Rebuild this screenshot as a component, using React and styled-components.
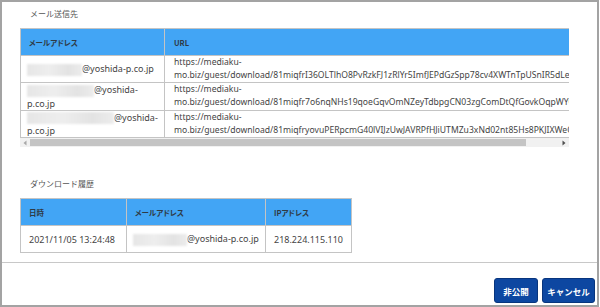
import React from 'react'
import styled, { createGlobalStyle } from 'styled-components'

const GlobalStyle = createGlobalStyle`
  html, body {
    margin: 0;
    padding: 0;
    background: #ffffff;
  }
  body {
    font-family: "Noto Sans", "Noto Sans CJK JP", sans-serif;
    color: #444;
  }
`

const Frame = styled.div`
  box-sizing: border-box;
  width: 599px;
  height: 307px;
  border: 2px solid #a3a3a3;
  background: #fff;
  display: flex;
  flex-direction: column;
  overflow: hidden;
`

const Main = styled.div`
  flex: 1;
  padding: 6px 0 0 18px;
  display: flex;
  flex-direction: column;
`

const SectionTitle = styled.div`
  font-family: "Noto Sans CJK JP", sans-serif;
  font-size: 8px;
  line-height: 12px;
  color: #555;
  padding-left: 10px;
  margin-top: ${p => p.top || 0}px;
  margin-bottom: 8px;
`

const ScrollArea = styled.div`
  width: 549px;
  overflow: hidden;
`

const Table = styled.table`
  border-collapse: collapse;
  table-layout: fixed;
  width: ${p => p.width}px;
  font-size: 9px;
`

const Th = styled.th`
  box-sizing: border-box;
  width: ${p => p.width ? `${p.width}px` : 'auto'};
  height: 27px;
  padding: 0 0 0 ${p => p.pad || 8}px;
  background: #42a5f5;
  border: 1px solid #c4c4c4;
  text-align: left;
  font-family: "Noto Sans CJK JP", sans-serif;
  font-feature-settings: "palt";
  font-size: 7.5px;
  font-weight: 700;
  color: #2f3a45;
`

const Td = styled.td`
  box-sizing: border-box;
  height: 27px;
  padding: 0 2px 0 ${p => p.pad || 8}px;
  border: 1px solid #c4c4c4;
  font-size: ${p => p.size || 9}px;
  line-height: 13px;
  vertical-align: middle;
  white-space: ${p => p.nowrap ? 'nowrap' : 'normal'};
`

const Blur = styled.span`
  display: inline-block;
  width: ${p => p.width}px;
  height: 12px;
  vertical-align: middle;
  background: linear-gradient(90deg, #e6e6e6, #eeeeee 40%, #e3e3e3 75%, #ececec);
  filter: blur(1px);
`

const ScrollBar = styled.div`
  width: 549px;
  height: 9px;
  background: #f1f1f1;
  display: flex;
  align-items: center;
`

const Arrow = styled.div`
  width: 10px;
  display: flex;
  justify-content: center;
  align-items: center;
`

const Track = styled.div`
  flex: 1;
  height: 9px;
  display: flex;
`

const Thumb = styled.div`
  height: 7px;
  margin-top: 1px;
  background: #c4c4c4;
`

const Footer = styled.div`
  height: 43px;
  box-sizing: border-box;
  border-top: 1px solid #c8c8c8;
  display: flex;
  justify-content: flex-end;
  align-items: flex-start;
  gap: 4px;
  padding: 15px 2px 0 0;
`

const Button = styled.button`
  box-sizing: border-box;
  width: ${p => p.width}px;
  height: 25px;
  padding: 0;
  background: #0d47a1;
  border: 1px solid #08357d;
  border-radius: 3px;
  color: #fff;
  font-family: "Noto Sans CJK JP", sans-serif;
  font-size: 8.5px;
  font-weight: 700;
`

const recipients = [
  {
    blur: 55,
    url: 'https://mediaku-mo.biz/guest/download/81miqfrI36OLTlhO8PvRzkFJ1zRlYr5ImfJEPdGzSpp78cv4XWTnTpUSnIR5dLeaQ',
  },
  {
    blur: 67,
    url: 'https://mediaku-mo.biz/guest/download/81miqfr7o6nqNHs19qoeGqvOmNZeyTdbpgCN03zgComDtQfGovkOqpWYQ8U',
  },
  {
    blur: 87,
    url: 'https://mediaku-mo.biz/guest/download/81miqfryovuPERpcmG40lVIJzUwJAVRPfHJiUTMZu3xNd02nt85Hs8PKJIXWeQ',
  },
]

const App = () => {
  return (
    <Frame>
      <GlobalStyle />
      <Main>
        <SectionTitle>メール送信先</SectionTitle>
        <ScrollArea>
          <Table width={600}>
            <thead>
              <tr>
                <Th width={144}>メールアドレス</Th>
                <Th pad={9}>URL</Th>
              </tr>
            </thead>
            <tbody>
              {recipients.map((r, i) => (
                <tr key={i}>
                  <Td pad={6}>
                    <Blur width={r.blur} />@yoshida-p.co.jp
                  </Td>
                  <Td pad={9} size={8.6}>{r.url}</Td>
                </tr>
              ))}
            </tbody>
          </Table>
        </ScrollArea>
        <ScrollBar>
          <Arrow>
            <svg width="4" height="6" viewBox="0 0 4 6">
              <path d="M3.5 0.5 L0.5 3 L3.5 5.5 Z" fill="#a8a8a8" />
            </svg>
          </Arrow>
          <Track>
            <Thumb style={{ marginLeft: 0, width: 496 }} />
          </Track>
          <Arrow>
            <svg width="4" height="6" viewBox="0 0 4 6">
              <path d="M0.5 0.5 L3.5 3 L0.5 5.5 Z" fill="#505050" />
            </svg>
          </Arrow>
        </ScrollBar>

        <SectionTitle top={31}>ダウンロード履歴</SectionTitle>
        <Table width={332}>
          <thead>
            <tr>
              <Th width={106}>日時</Th>
              <Th width={139}>メールアドレス</Th>
              <Th>IPアドレス</Th>
            </tr>
          </thead>
          <tbody>
            <tr>
              <Td nowrap>2021/11/05 13:24:48</Td>
              <Td pad={6} nowrap>
                <Blur width={54} />@yoshida-p.co.jp
              </Td>
              <Td nowrap>218.224.115.110</Td>
            </tr>
          </tbody>
        </Table>
      </Main>
      <Footer>
        <Button width={44}>非公開</Button>
        <Button width={53}>キャンセル</Button>
      </Footer>
    </Frame>
  )
}

export default App
